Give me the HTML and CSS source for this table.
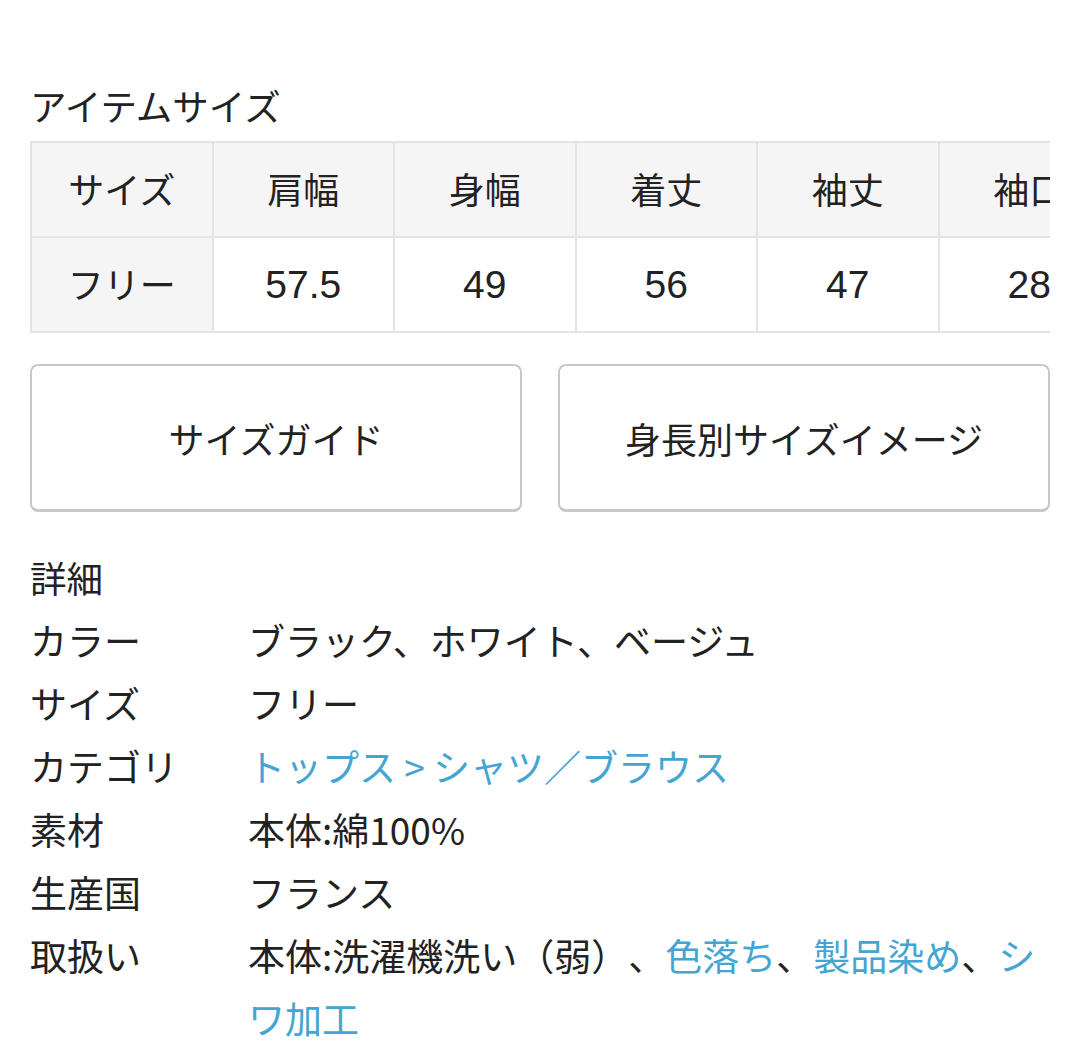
FILE: index.html
```html
<!DOCTYPE html>
<html lang="ja">
<head>
<meta charset="utf-8">
<title>アイテムサイズ</title>
<link rel="stylesheet" href="styles.css">
</head>
<body>
<main class="page">
  <h2 class="section-title">アイテムサイズ</h2>
  <div class="table-wrap">
    <table class="size-table">
      <thead>
        <tr>
          <th>サイズ</th><th>肩幅</th><th>身幅</th><th>着丈</th><th>袖丈</th><th>袖口</th>
        </tr>
      </thead>
      <tbody>
        <tr>
          <th>フリー</th><td class="num">57.5</td><td class="num">49</td><td class="num">56</td><td class="num">47</td><td class="num">28</td>
        </tr>
      </tbody>
    </table>
  </div>
  <div class="buttons">
    <button class="btn" type="button">サイズガイド</button>
    <button class="btn" type="button">身長別サイズイメージ</button>
  </div>
  <section class="details">
    <h3 class="details-title">詳細</h3>
    <dl class="details-list">
      <dt>カラー</dt><dd>ブラック、ホワイト、ベージュ</dd>
      <dt>サイズ</dt><dd>フリー</dd>
      <dt>カテゴリ</dt><dd><a class="link" href="#">トップス &gt; シャツ／ブラウス</a></dd>
      <dt>素材</dt><dd>本体:綿100%</dd>
      <dt>生産国</dt><dd>フランス</dd>
      <dt>取扱い</dt><dd>本体:洗濯機洗い（弱）、<a class="link" href="#">色落ち</a>、<a class="link" href="#">製品染め</a>、<a class="link" href="#">シワ加工</a></dd>
    </dl>
  </section>
</main>
</body>
</html>
```

FILE: styles.css
```css
* { box-sizing: border-box; }
html, body { margin: 0; padding: 0; background: #fff; }
body {
  font-family: "Noto Sans CJK JP", "Noto Sans", sans-serif;
  color: #222;
  text-spacing-trim: space-all;
}
.page {
  padding: 81px 30px 0 30px;
  width: 1080px;
}
.section-title {
  margin: 0 0 10px 0;
  font-size: 36.5px;
  font-weight: 400;
  line-height: 50px;
}
.table-wrap {
  width: 1020px;
  overflow: hidden;
}
.size-table {
  border-collapse: collapse;
  table-layout: fixed;
  width: 1089px;
}
.size-table th,
.size-table td {
  width: 181.5px;
  height: 95px;
  padding: 0 0 4px 0;
  border: 2px solid #e4e4e4;
  text-align: center;
  vertical-align: middle;
  font-size: 36px;
  font-weight: 400;
  line-height: 1;
  white-space: nowrap;
}
.size-table .num {
  font-family: "Liberation Sans", "Noto Sans CJK JP", sans-serif;
  font-size: 39px;
  padding-bottom: 0;
}
.size-table thead th,
.size-table tbody th {
  background: #f5f5f5;
}
.size-table td { background: #fff; }
.buttons {
  display: flex;
  gap: 36px;
  margin-top: 31px;
  width: 1020px;
}
.btn {
  flex: 1;
  height: 148px;
  background: #fff;
  border: 2px solid #c8c8c8;
  border-bottom-width: 3px;
  border-radius: 8px;
  font-family: inherit;
  font-size: 36px;
  color: #222;
  padding: 0;
  text-spacing-trim: space-all;
}
.details {
  margin-top: 34px;
  width: 1016px;
}
.details-title {
  margin: 0;
  font-size: 36.5px;
  font-weight: 400;
  line-height: 63px;
}
.details-list {
  margin: 0;
  display: grid;
  grid-template-columns: 218px 1fr;
  font-size: 37px;
  line-height: 63px;
}
.details-list dt,
.details-list dd { margin: 0; }
.link {
  color: #45a5d2;
  text-decoration: none;
}
```
